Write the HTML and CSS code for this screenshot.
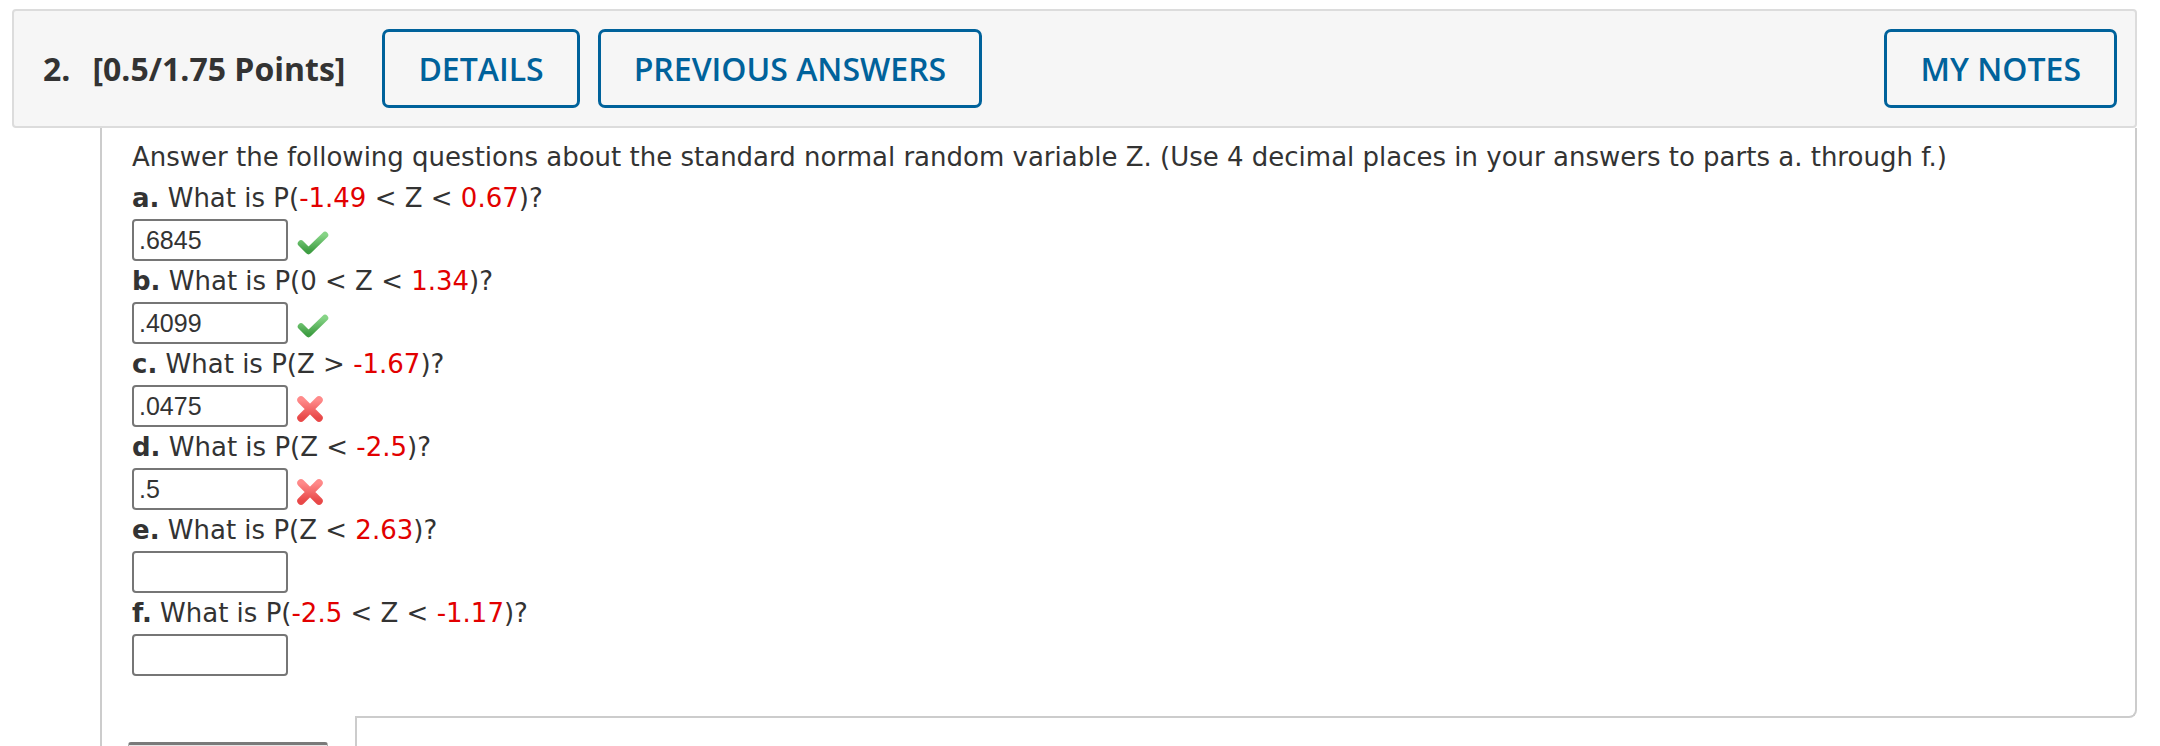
FILE: index.html
```html
<!DOCTYPE html>
<html>
<head>
<meta charset="utf-8">
<link rel="stylesheet" href="styles.css">
</head>
<body>
<svg class="defs" width="0" height="0" aria-hidden="true">
  <defs>
    <linearGradient id="gOk" x1="0" y1="0" x2="0" y2="1">
      <stop offset="0" stop-color="#86d486"/>
      <stop offset="1" stop-color="#3f9e43"/>
    </linearGradient>
    <linearGradient id="gBad" x1="0" y1="0" x2="0" y2="1">
      <stop offset="0" stop-color="#ff8a8a"/>
      <stop offset="1" stop-color="#e84848"/>
    </linearGradient>
  </defs>
</svg>
<div class="page">
  <div class="qhead">
    <div class="qtitle"><span class="qnum">2.</span><span class="qpts">[0.5/1.75 Points]</span></div>
    <button class="hbtn">DETAILS</button>
    <button class="hbtn">PREVIOUS ANSWERS</button>
    <div class="spacer"></div>
    <button class="hbtn last">MY NOTES</button>
  </div>
  <div class="qmain">
    <div class="qbody">
      <div class="line">Answer the following questions about the standard normal random variable Z. (Use 4 decimal places in your answers to parts a. through f.)</div>

      <div class="line"><b>a.</b> What is P(<span class="red">-1.49</span> &lt; Z &lt; <span class="red">0.67</span>)?</div>
      <div class="ans"><input class="box" value=".6845" readonly>
        <svg class="ok" width="32" height="26" viewBox="0 0 32 26"><path d="M4 13.5 L11.5 21 L28 5" fill="none" stroke="url(#gOk)" stroke-width="6.5" stroke-linecap="round" stroke-linejoin="round"/></svg>
      </div>

      <div class="line"><b>b.</b> What is P(0 &lt; Z &lt; <span class="red">1.34</span>)?</div>
      <div class="ans"><input class="box" value=".4099" readonly>
        <svg class="ok" width="32" height="26" viewBox="0 0 32 26"><path d="M4 13.5 L11.5 21 L28 5" fill="none" stroke="url(#gOk)" stroke-width="6.5" stroke-linecap="round" stroke-linejoin="round"/></svg>
      </div>

      <div class="line"><b>c.</b> What is P(Z &gt; <span class="red">-1.67</span>)?</div>
      <div class="ans"><input class="box" value=".0475" readonly>
        <svg class="bad" width="28" height="28" viewBox="0 0 28 28"><path d="M5 5 L23 23 M23 5 L5 23" fill="none" stroke="url(#gBad)" stroke-width="7.5" stroke-linecap="round"/></svg>
      </div>

      <div class="line"><b>d.</b> What is P(Z &lt; <span class="red">-2.5</span>)?</div>
      <div class="ans"><input class="box" value=".5" readonly>
        <svg class="bad" width="28" height="28" viewBox="0 0 28 28"><path d="M5 5 L23 23 M23 5 L5 23" fill="none" stroke="url(#gBad)" stroke-width="7.5" stroke-linecap="round"/></svg>
      </div>

      <div class="line"><b>e.</b> What is P(Z &lt; <span class="red">2.63</span>)?</div>
      <div class="ans"><input class="box" value=""></div>

      <div class="line"><b>f.</b> What is P(<span class="red">-2.5</span> &lt; Z &lt; <span class="red">-1.17</span>)?</div>
      <div class="ans"><input class="box" value=""></div>
    </div>
    <div class="qfoot">
      <div class="stub"></div>
      <div class="panel"></div>
    </div>
  </div>
</div>
</body>
</html>
```
FILE: styles.css
```css
html, body {
  margin: 0;
  padding: 0;
  background: #ffffff;
  overflow: hidden;
}
.defs {
  position: absolute;
  width: 0;
  height: 0;
}
.page {
  padding: 9px 0 0 12px;
  width: 2125px;
}
.qhead {
  display: flex;
  align-items: center;
  box-sizing: border-box;
  height: 119px;
  border: 2px solid #dcdcdc;
  border-radius: 4px;
  background: #f6f6f6;
  padding: 0 18px 0 29px;
}
.qtitle {
  font-family: "Open Sans", sans-serif;
  font-weight: 700;
  font-size: 32px;
  color: #333333;
  margin-right: 37px;
  white-space: nowrap;
}
.qpts {
  margin-left: 22px;
}
.hbtn {
  font-family: "Open Sans", sans-serif;
  font-weight: 600;
  font-size: 32px;
  color: #00629b;
  background: transparent;
  border: 3px solid #00629b;
  border-radius: 7px;
  box-sizing: border-box;
  height: 79px;
  padding: 0 33px;
  margin: 0 18px 0 0;
  white-space: nowrap;
}
.hbtn.last {
  margin-right: 0;
}
.spacer {
  flex: 1;
}
.qmain {
  margin-left: 88px;
  border-left: 2px solid #cccccc;
}
.qbody {
  position: relative;
  font-family: "DejaVu Sans", Verdana, sans-serif;
  font-size: 26px;
  color: #333333;
  padding: 9px 0 40px 30px;
  border-right: 2px solid #cccccc;
  border-bottom: 2px solid #cccccc;
  border-bottom-right-radius: 8px;
}
.qbody::after {
  content: "";
  position: absolute;
  left: 0;
  bottom: -2px;
  width: 253px;
  height: 2px;
  background: #ffffff;
}
.line {
  height: 41px;
  line-height: 41px;
  white-space: nowrap;
}
.red {
  color: #e20000;
}
.ans {
  display: flex;
  align-items: center;
  height: 42px;
}
.box {
  width: 156px;
  height: 42px;
  box-sizing: border-box;
  border: 2px solid #767676;
  border-radius: 4px;
  font-family: "Liberation Sans", Arial, sans-serif;
  font-size: 25px;
  color: #333333;
  padding: 0 0 0 5px;
  margin: 0;
  background: #ffffff;
  outline: none;
}
.ok {
  margin: 6px 0 0 9px;
}
.bad {
  margin: 6px 0 0 8px;
}
.qfoot {
  display: flex;
  height: 60px;
}
.stub {
  margin: 24px 0 0 26px;
  width: 200px;
  height: 30px;
  box-sizing: border-box;
  border-top: 3px solid #7a7a7a;
  border-left: 1px solid #aaaaaa;
  border-right: 1px solid #aaaaaa;
  background: #e6e6e6;
  border-radius: 3px 3px 0 0;
}
.panel {
  margin-left: 27px;
  flex: 1;
  border-left: 2px solid #cccccc;
}
```
